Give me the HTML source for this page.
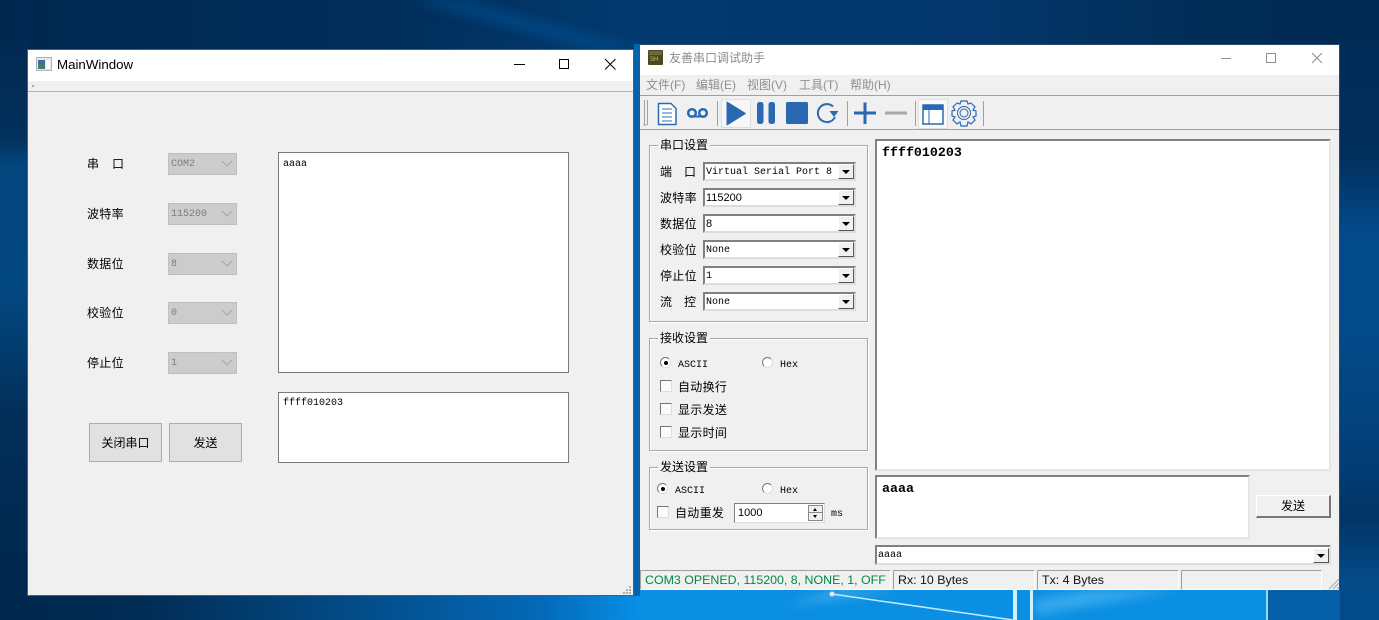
<!DOCTYPE html>
<html><head><meta charset="utf-8"><style>
html,body{margin:0;padding:0;width:1379px;height:620px;overflow:hidden}
body{position:relative;font-family:"Liberation Sans","WenQuanYi Zen Hei","Noto Sans CJK SC",sans-serif;font-size:13px;color:#000;background:#012a50}
div,span{position:absolute;white-space:nowrap;box-sizing:border-box}
.cj{font-family:"Liberation Sans","WenQuanYi Zen Hei","Noto Sans CJK SC",sans-serif;font-size:12px;line-height:14px;letter-spacing:.3px}
.m{font-family:"Liberation Mono",monospace;font-size:10px;line-height:14px}
.dc{left:168px;width:69px;height:22px;background:#ccc;border:1px solid #bfbfbf;color:#7d7d7d;font:10px/21px "Liberation Mono",monospace;padding-left:2px}
.dc svg{position:absolute;right:3px;top:6px}
.te{background:#fff;border:1px solid #7a7a7a}
.btn{background:#e1e1e1;border:1px solid #adadad;text-align:center;font-size:12px;line-height:38px;top:423px;height:39px;width:73px}
.gb{left:649px;width:219px;border:1px solid #a9a9a9;box-shadow:inset 1px 1px 0 #fff,1px 1px 0 #fff}
.gt{background:#f0f0f0;left:658px;padding:0 2px;font-size:12px;line-height:14px}
.cb{left:703px;width:153px;height:19px;background:#fff;border:2px solid #808080;border-right-color:#ddd;border-bottom-color:#ddd;font:10px/17px "Liberation Mono",monospace;padding-left:1px}
.ar{right:0;top:0;width:16px;height:15px;background:#f0f0f0;border:1px solid #fff;border-right-color:#555;border-bottom-color:#555}
.ar:after{content:"";position:absolute;left:3px;top:5px;border:4px solid transparent;border-top:4px solid #000;border-bottom:0}
.ck{width:12px;height:12px;background:#fbfbfb;border:1px solid #777;border-right-color:#ddd;border-bottom-color:#ddd}
.rd{width:11px;height:11px;border-radius:50%;background:#fff;border:1px solid #777;border-right-color:#ddd;border-bottom-color:#ddd}
.dot{left:3px;top:3px;width:4px;height:4px;border-radius:50%;background:#000}
.sb{top:570px;height:20px;border-top:1px solid #a0a0a0;border-left:1px solid #a0a0a0;border-bottom:1px solid #fff;border-right:1px solid #fff;font:12.400px/18px "Liberation Sans",sans-serif;padding-left:4px}
</style></head><body>

<!-- desktop details -->
<svg style="position:absolute;left:0;top:0" width="1379" height="620">
<defs>
<linearGradient id="l" x1="0" x2="1"><stop offset="0" stop-color="#01284d"/><stop offset=".22" stop-color="#012c54"/><stop offset=".6" stop-color="#03508f"/><stop offset=".85" stop-color="#046ab9"/><stop offset="1" stop-color="#0790e6"/></linearGradient>
<linearGradient id="t" x1="0" x2="1"><stop offset="0" stop-color="#01284f"/><stop offset=".3" stop-color="#012f5c"/><stop offset=".45" stop-color="#023a6e"/><stop offset=".7" stop-color="#03376c"/><stop offset=".88" stop-color="#012c56"/><stop offset="1" stop-color="#012a52"/></linearGradient>
<linearGradient id="a" x1="0" x2="0" y1="0" y2="1"><stop offset="0" stop-color="#022a52"/><stop offset=".17" stop-color="#02305c"/><stop offset=".22" stop-color="#03467e"/><stop offset=".45" stop-color="#03477f"/><stop offset=".65" stop-color="#022f5a"/><stop offset="1" stop-color="#01274c"/></linearGradient>
<linearGradient id="b" x1="0" x2="0" y1="0" y2="1"><stop offset="0" stop-color="#012c58"/><stop offset=".2" stop-color="#012f5c"/><stop offset=".33" stop-color="#034a8a"/><stop offset=".5" stop-color="#034a8a"/><stop offset=".72" stop-color="#033f78"/><stop offset=".82" stop-color="#023464"/><stop offset=".93" stop-color="#024a88"/><stop offset="1" stop-color="#024a88"/></linearGradient>
<filter id="bl" x="-20%" y="-50%" width="140%" height="200%"><feGaussianBlur stdDeviation="5"/></filter>
</defs>
<rect x="0" y="0" width="1379" height="50" fill="url(#t)"/>
<polygon points="410,0 465,0 650,50 590,50" fill="#044c88" opacity=".7" filter="url(#bl)"/>
<rect x="0" y="40" width="27" height="570" fill="url(#a)"/>
<rect x="1340" y="40" width="39" height="580" fill="url(#b)"/>
<rect x="634" y="44" width="6" height="552" fill="#0563ab"/>
<rect x="0" y="596" width="640" height="24" fill="url(#l)"/>
<rect x="640" y="590" width="628" height="30" fill="#0a8fe2"/>
<rect x="1268" y="590" width="72" height="30" fill="#0560a8"/>
<rect x="1340" y="590" width="39" height="30" fill="#024a88"/>
<polygon points="785,606 835,590 900,590" fill="#5bb8ec" opacity=".7" filter="url(#bl)"/>
<polygon points="1035,615 1180,590 1090,590 1035,600" fill="#45b0ee" opacity=".8" filter="url(#bl)"/>
<polyline points="832,594 1013,620" stroke="#bfeaff" stroke-width="1.500" fill="none"/>
<rect x="1013" y="590" width="4" height="30" fill="#cdf3ff"/>
<rect x="1030" y="590" width="3" height="30" fill="#cdf3ff"/>
<rect x="1266" y="590" width="2" height="30" fill="#8fdcf5"/>
<circle cx="832" cy="594" r="2.500" fill="#dfe9ee"/>
</svg>

<!-- LEFT WINDOW -->
<div style="left:27px;top:49px;width:607px;height:547px;background:#f0f0f0;border:1px solid #0f6fbd"></div>
<div style="left:28px;top:50px;width:605px;height:31px;background:#fff"></div>
<svg style="position:absolute;left:36px;top:57px" width="16" height="14"><rect x=".5" y=".5" width="15" height="13" fill="#e6e6e6" stroke="#b5b5b5"/><rect x="2" y="3" width="7" height="9" fill="#3d7f7a"/><rect x="2" y="3" width="7" height="4" fill="#3f6f9c"/><rect x="10" y="3" width="4" height="9" fill="#fff"/></svg>
<div style="left:57px;top:57px;font:13.300px/15px 'Liberation Sans',sans-serif;color:#000">MainWindow</div>
<svg style="position:absolute;left:510px;top:55px" width="110" height="20" fill="none" stroke="#000"><path d="M4 9.500H15"/><rect x="49.500" y="4.500" width="9" height="9"/><path d="M95 4L105.500 14.500M105.500 4L95 14.500"/></svg>
<div style="left:28px;top:81px;width:605px;height:10px;background:#f0f0f0"></div>
<div style="left:28px;top:91px;width:605px;height:1px;background:#b4b4b4"></div>
<div style="left:32px;top:85px;width:2px;height:2px;background:#aaa"></div>

<div class="cj" style="left:87px;top:157px">串</div><div class="cj" style="left:112px;top:157px">口</div>
<div class="cj" style="left:87px;top:207px">波特率</div>
<div class="cj" style="left:87px;top:257px">数据位</div>
<div class="cj" style="left:87px;top:306px">校验位</div>
<div class="cj" style="left:87px;top:356px">停止位</div>

<div class="dc" style="top:153px">COM2<svg width="12" height="7"><path d="M1 1l5 5 5-5" fill="none" stroke="#a5a5a5"/></svg></div>
<div class="dc" style="top:203px">115200<svg width="12" height="7"><path d="M1 1l5 5 5-5" fill="none" stroke="#a5a5a5"/></svg></div>
<div class="dc" style="top:253px">8<svg width="12" height="7"><path d="M1 1l5 5 5-5" fill="none" stroke="#a5a5a5"/></svg></div>
<div class="dc" style="top:302px">0<svg width="12" height="7"><path d="M1 1l5 5 5-5" fill="none" stroke="#a5a5a5"/></svg></div>
<div class="dc" style="top:352px">1<svg width="12" height="7"><path d="M1 1l5 5 5-5" fill="none" stroke="#a5a5a5"/></svg></div>

<div class="te m" style="left:278px;top:152px;width:291px;height:221px;padding:5px 4px"><span style="position:static">aaaa</span></div>
<div class="te m" style="left:278px;top:392px;width:291px;height:71px;padding:4px 4px"><span style="position:static">ffff010203</span></div>
<div class="btn" style="left:89px">关闭串口</div>
<div class="btn" style="left:169px">发送</div>
<svg style="position:absolute;left:622px;top:585px" width="10" height="10" fill="#b0b0b0"><rect x="7" y="1" width="2" height="2"/><rect x="4" y="4" width="2" height="2"/><rect x="7" y="4" width="2" height="2"/><rect x="1" y="7" width="2" height="2"/><rect x="4" y="7" width="2" height="2"/><rect x="7" y="7" width="2" height="2"/></svg>

<!-- RIGHT WINDOW -->
<div style="left:640px;top:44px;width:700px;height:546px;background:#f0f0f0;border-top:1px solid #2a4a6c;border-right:1px solid #2a4a6c"></div>
<div style="left:640px;top:45px;width:699px;height:30px;background:#fff"></div>
<svg style="position:absolute;left:648px;top:50px" width="16" height="16"><rect width="15" height="15" rx="1" fill="#4a4a22"/><rect x="1" y="1" width="13" height="4" fill="#6b6b35"/><text x="2" y="11" font-size="6" fill="#c9c36a" font-family="Liberation Sans">SH</text></svg>
<div style="left:669px;top:51px;font-size:12px;line-height:15px;color:#8c8c8c">友善串口调试助手</div>
<svg style="position:absolute;left:1215px;top:50px" width="110" height="16" fill="none" stroke="#8f8f8f"><path d="M6 8.500H16"/><rect x="51.500" y="3.500" width="9" height="9"/><path d="M97 3l10 10M107 3l-10 10"/></svg>

<div style="left:640px;top:75px;width:699px;height:20px;background:#f0f0f0"></div>
<div style="left:646px;top:78px;font-size:12px;line-height:14px;color:#8f8f8f"><span style="left:0">文件(F)</span><span style="left:50px">编辑(E)</span><span style="left:101px">视图(V)</span><span style="left:153px">工具(T)</span><span style="left:204px">帮助(H)</span></div>
<div style="left:640px;top:95px;width:699px;height:1px;background:#a0a0a0"></div>
<div style="left:640px;top:129px;width:699px;height:1px;background:#a0a0a0"></div>

<!-- toolbar -->
<svg style="position:absolute;left:640px;top:96px" width="360" height="33">
<path d="M4.500 4V29M7.500 4V29M3 29H7" fill="none" stroke="#a0a0a0"/>
<path d="M18.500 7.500H31L36 12.500V28.500H18.500Z" fill="#fff" stroke="#2d6cb5" stroke-width="1.500"/>
<path d="M22 13H32M22 17H32M22 21H32M22 25H32" stroke="#2d6cb5"/>
<circle cx="52" cy="17" r="3.800" fill="none" stroke="#2a69b2" stroke-width="2.500"/><circle cx="63" cy="17" r="3.800" fill="none" stroke="#2a69b2" stroke-width="2.500"/><path d="M52 20.500H63" stroke="#2a69b2" stroke-width="2"/>
<path d="M77.500 5V30" stroke="#a0a0a0"/>
<rect x="81.500" y="3.500" width="29" height="28" fill="#f7f7f7" stroke="#e0e0e0"/>
<path d="M87 6V29L105.500 17.500Z" fill="#2a69b2" stroke="#2a69b2" stroke-linejoin="round"/>
<rect x="117" y="6" width="6.500" height="22" rx="2.500" fill="#2a69b2"/><rect x="128.500" y="6" width="6.500" height="22" rx="2.500" fill="#2a69b2"/>
<rect x="146" y="6" width="22" height="22" rx="1.500" fill="#2a69b2"/>
<path d="M193 10.500A9 9 0 1 0 195 21" fill="none" stroke="#2a69b2" stroke-width="2"/><path d="M189.500 15H198.500L194 21Z" fill="#2a69b2"/>
<path d="M207.500 5V30" stroke="#a0a0a0"/>
<path d="M214 17H236M225 6.500V28" stroke="#2a69b2" stroke-width="3"/>
<path d="M245 17H267" stroke="#a9a9a9" stroke-width="3"/>
<path d="M275.500 5V30" stroke="#a0a0a0"/>
<rect x="278.500" y="3.500" width="29" height="29" fill="#f8f8f8" stroke="#e0e0e0"/>
<rect x="283" y="9" width="20" height="19" fill="#fff" stroke="#2a69b2" stroke-width="1.500"/><rect x="283" y="9" width="20" height="5" fill="#2a69b2"/><path d="M289 14V28" stroke="#2a69b2"/>
<circle cx="324" cy="17" r="4" fill="none" stroke="#2a69b2"/><circle cx="324" cy="17" r="6.500" fill="none" stroke="#2a69b2"/>
<path d="M321 5h6l1 3 3-1 4 4-2 3 3 1v5l-3 1 2 3-4 4-3-2-1 4h-6l-1-4-3 2-4-4 2-3-3-1v-5l3-1-2-3 4-4 3 1z" fill="none" stroke="#2a69b2" stroke-width="1.200"/>
<path d="M343.500 5V30" stroke="#a0a0a0"/>
</svg>

<!-- group 1 -->
<div class="gb" style="top:145px;height:177px"></div>
<div class="gt" style="top:138px">串口设置</div>
<div class="cj" style="left:660px;top:165px">端</div><div class="cj" style="left:684px;top:165px">口</div>
<div class="cj" style="left:660px;top:191px">波特率</div>
<div class="cj" style="left:660px;top:217px">数据位</div>
<div class="cj" style="left:660px;top:243px">校验位</div>
<div class="cj" style="left:660px;top:269px">停止位</div>
<div class="cj" style="left:660px;top:295px">流</div><div class="cj" style="left:684px;top:295px">控</div>
<div class="cb" style="top:162px">Virtual Serial Port 8<div class="ar"></div></div>
<div class="cb" style="top:188px;font-family:'Liberation Sans',sans-serif;font-size:11px">115200<div class="ar"></div></div>
<div class="cb" style="top:214px;font-family:'Liberation Sans',sans-serif;font-size:11px">8<div class="ar"></div></div>
<div class="cb" style="top:240px">None<div class="ar"></div></div>
<div class="cb" style="top:266px">1<div class="ar"></div></div>
<div class="cb" style="top:292px">None<div class="ar"></div></div>

<!-- group 2 -->
<div class="gb" style="top:338px;height:113px"></div>
<div class="gt" style="top:331px">接收设置</div>
<div class="rd" style="left:660px;top:357px"><div class="dot"></div></div>
<div class="m" style="left:678px;top:359px">ASCII</div>
<div class="rd" style="left:762px;top:357px"></div>
<div class="m" style="left:780px;top:359px">Hex</div>
<div class="ck" style="left:660px;top:380px"></div><div class="cj" style="left:678px;top:380px">自动换行</div>
<div class="ck" style="left:660px;top:403px"></div><div class="cj" style="left:678px;top:403px">显示发送</div>
<div class="ck" style="left:660px;top:426px"></div><div class="cj" style="left:678px;top:426px">显示时间</div>

<!-- group 3 -->
<div class="gb" style="top:467px;height:63px"></div>
<div class="gt" style="top:460px">发送设置</div>
<div class="rd" style="left:657px;top:483px"><div class="dot"></div></div>
<div class="m" style="left:675px;top:485px">ASCII</div>
<div class="rd" style="left:762px;top:483px"></div>
<div class="m" style="left:780px;top:485px">Hex</div>
<div class="ck" style="left:657px;top:506px"></div><div class="cj" style="left:675px;top:506px">自动重发</div>
<div style="left:734px;top:503px;width:91px;height:20px;background:#fff;border:1px solid #808080;border-right-color:#ddd;border-bottom-color:#ddd;font:11px/19px 'Liberation Sans',sans-serif;padding-left:3px">1000
<div style="right:1px;top:1px;width:15px;height:16px;background:#f0f0f0;border:1px solid #888"><div style="left:0;top:6px;width:13px;height:1px;background:#888"></div><div style="left:4px;top:2px;border:2.500px solid transparent;border-bottom:3px solid #000;border-top:0"></div><div style="left:4px;top:9px;border:2.500px solid transparent;border-top:3px solid #000;border-bottom:0"></div></div></div>
<div class="m" style="left:831px;top:508px">ms</div>

<!-- text areas -->
<div style="left:875px;top:139px;width:456px;height:332px;background:#fff;border:2px solid #808080;border-right:2px solid #e6e6e6;border-bottom:2px solid #e6e6e6;font:bold 13.300px/16px 'Liberation Mono',monospace;padding:4px 5px">ffff010203</div>
<div style="left:875px;top:475px;width:375px;height:64px;background:#fff;border:2px solid #808080;border-right:2px solid #e6e6e6;border-bottom:2px solid #e6e6e6;font:bold 13.300px/16px 'Liberation Mono',monospace;padding:4px 5px">aaaa</div>
<div style="left:1256px;top:495px;width:75px;height:23px;background:#f0f0f0;border:1px solid #fff;border-right:2px solid #777;border-bottom:2px solid #777;text-align:center;font-size:12px;line-height:21px">发送</div>
<div class="cb" style="left:875px;top:545px;width:456px;height:20px;line-height:18px">aaaa<div class="ar" style="top:1px"></div></div>

<!-- status -->
<div class="sb" style="left:640px;width:251px;color:#008a44">COM3 OPENED, 115200, 8, NONE, 1, OFF</div>
<div class="sb" style="left:893px;width:142px;color:#111">Rx: 10 Bytes</div>
<div class="sb" style="left:1037px;width:142px;color:#111">Tx: 4 Bytes</div>
<div class="sb" style="left:1181px;width:141px"></div>
<svg style="position:absolute;left:1328px;top:578px" width="12" height="12" stroke="#a8a8a8"><path d="M11 1L1 11M11 5L5 11M11 9L9 11"/></svg>
</body></html>
